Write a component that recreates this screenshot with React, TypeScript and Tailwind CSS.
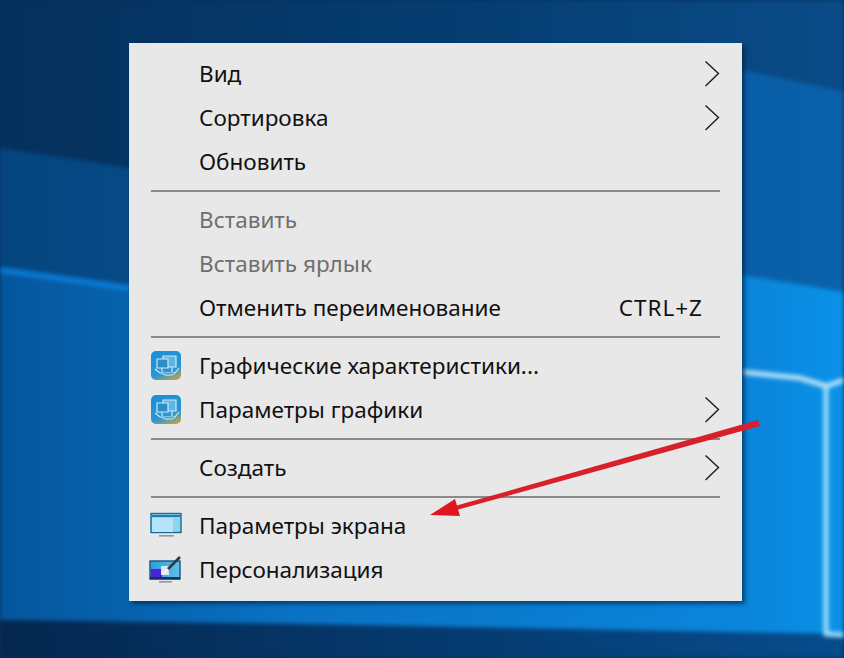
// Desktop context menu with a red annotation arrow
const Chevron = () => (
  <svg width="16" height="28" viewBox="0 0 16 28" fill="none" className="shrink-0">
    <path d="M1.5 1.5 L14.5 13.5 L1.5 26" stroke="#1a1a1a" strokeWidth="1.4" />
  </svg>
);

const GraphicsIcon = () => (
  <svg width="32" height="32" viewBox="0 0 32 32">
    <defs>
      <linearGradient id="gfx" x1="0.3" y1="0" x2="0.7" y2="1">
        <stop offset="0" stopColor="#1c8fd6" />
        <stop offset="0.7" stopColor="#2b97d2" />
        <stop offset="1" stopColor="#b3a15a" />
      </linearGradient>
    </defs>
    <rect x="1" y="1" width="30" height="29" rx="5" fill="url(#gfx)" />
    <path d="M13 6h13v11H13z" fill="#5cb5e2" stroke="#c8ecfa" strokeWidth="1.2" />
    <path d="M7 9h11v9H7z" fill="#2f8dc6" stroke="#c8ecfa" strokeWidth="1.2" />
    <path d="M5 19l5 4h15l4-5" fill="none" stroke="#c8ecfa" strokeWidth="1.2" />
    <path d="M12 23c0 3 13 3 13 0" fill="#4ba8da" stroke="#c8ecfa" strokeWidth="1" />
    <path d="M12 18v4M22 17v5" stroke="#c8ecfa" strokeWidth="1.2" />
  </svg>
);

const DisplayIcon = () => (
  <svg width="32" height="28" viewBox="0 0 32 28">
    <rect x="1" y="1.5" width="30" height="19" fill="#8fd2f2" stroke="#176a92" strokeWidth="1.4" />
    <rect x="2" y="6" width="21" height="14" fill="#b5e3f7" />
    <rect x="2" y="3" width="28" height="2" fill="#1d7fae" />
    <rect x="9" y="23" width="15" height="1.6" fill="#8a98a0" />
  </svg>
);

const PersonalizeIcon = () => (
  <svg width="34" height="32" viewBox="0 0 34 32">
    <defs>
      <linearGradient id="scr" x1="0" y1="0" x2="1" y2="0">
        <stop offset="0" stopColor="#2f9ed8" />
        <stop offset="1" stopColor="#5cc0ea" />
      </linearGradient>
    </defs>
    <rect x="1" y="7" width="30" height="18" fill="url(#scr)" stroke="#14547c" strokeWidth="1.4" />
    <rect x="2" y="15" width="11" height="8" fill="#4f1fe0" />
    <rect x="12" y="12" width="8" height="9" fill="#dbe6f5" />
    <rect x="1" y="23" width="30" height="2.4" fill="#14305c" />
    <path d="M18 16 L31 3" stroke="#2c3b45" strokeWidth="2.6" />
    <path d="M14 20 L19 15" stroke="#eef4f8" strokeWidth="3" />
    <rect x="10" y="27" width="13" height="1.6" fill="#8a98a0" />
  </svg>
);

const Row = ({
  label,
  icon,
  hint,
  arrow,
  disabled,
}: {
  label: string;
  icon?: React.ReactNode;
  hint?: string;
  arrow?: boolean;
  disabled?: boolean;
}) => (
  <div className="flex h-11 items-center">
    <div className="flex w-[70px] shrink-0 items-center justify-center pl-[3px]">{icon}</div>
    <span className={`flex-1 ${disabled ? 'text-[#6f6f6f]' : 'text-[#111111]'}`}>{label}</span>
    {hint && <span className="mr-[39px] tracking-[1px] text-[#111111]">{hint}</span>}
    {arrow && (
      <span className="mr-[22px]">
        <Chevron />
      </span>
    )}
  </div>
);

const Separator = () => (
  <div className="flex h-3.5 items-center px-[22px]">
    <div className="h-[2px] w-full bg-[#8a8a8a]" />
  </div>
);

export default function App() {
  return (
    <div className="relative h-[658px] w-[844px] overflow-hidden bg-[#05305c] font-['Noto_Sans',sans-serif]">
      {/* Wallpaper */}
      <svg className="absolute inset-0 blur-[2px]" width="844" height="658" viewBox="0 0 844 658">
        <defs>
          <linearGradient id="sky" x1="0" y1="0" x2="1" y2="0">
            <stop offset="0" stopColor="#05305c" />
            <stop offset="0.6" stopColor="#063f74" />
            <stop offset="1" stopColor="#0a4c88" />
          </linearGradient>
          <linearGradient id="topBand" x1="0" y1="0" x2="1" y2="0">
            <stop offset="0" stopColor="#05457f" />
            <stop offset="1" stopColor="#0a62ac" />
          </linearGradient>
          <linearGradient id="lowBand" x1="0" y1="0" x2="1" y2="0">
            <stop offset="0" stopColor="#05569c" />
            <stop offset="0.35" stopColor="#0a72c4" />
            <stop offset="0.9" stopColor="#0a86dc" />
            <stop offset="1" stopColor="#0a92e8" />
          </linearGradient>
          <linearGradient id="taskbar" x1="0" y1="0" x2="1" y2="0">
            <stop offset="0" stopColor="#05274f" />
            <stop offset="1" stopColor="#064c8c" />
          </linearGradient>
        </defs>
        <path d="M0 0H844V658H0Z" fill="url(#sky)" />
        <path d="M0 148 L130 168 L742 70 L844 92 L844 300 L0 290Z" fill="url(#topBand)" />
        <path d="M0 268 L130 286 L742 275 L844 292 L844 640 L0 625Z" fill="url(#lowBand)" />
        <path d="M0 270 L130 288" stroke="#0a7ad4" strokeWidth="6" />
        <path d="M0 620 L300 624 L844 634 L844 658 L0 658Z" fill="url(#taskbar)" />
        <path d="M742 372 L800 378 L826 386 L844 380" stroke="#b8e4f6" strokeWidth="5" fill="none" />
        <path d="M826 386 L826 634 L844 635" stroke="#a0e0fa" strokeWidth="5" fill="none" />
      </svg>

      {/* Context menu */}
      <div className="absolute left-[129px] top-[43px] w-[613px] bg-[#e9e8e8] py-[9px] text-[22.5px] leading-none shadow-[3px_3px_4px_rgba(0,30,60,0.6)]">
        <Row label="Вид" arrow />
        <Row label="Сортировка" arrow />
        <Row label="Обновить" />
        <Separator />
        <Row label="Вставить" disabled />
        <Row label="Вставить ярлык" disabled />
        <Row label="Отменить переименование" hint="CTRL+Z" />
        <Separator />
        <Row label="Графические характеристики..." icon={<GraphicsIcon />} />
        <Row label="Параметры графики" icon={<GraphicsIcon />} arrow />
        <Separator />
        <Row label="Создать" arrow />
        <Separator />
        <Row label="Параметры экрана" icon={<DisplayIcon />} />
        <Row label="Персонализация" icon={<PersonalizeIcon />} />
      </div>

      {/* Red arrow annotation */}
      <svg className="absolute inset-0" width="844" height="658" viewBox="0 0 844 658">
        <path d="M760 426 L453 511 L455 506 L758 420Z" fill="#d8202a" />
        <path d="M430 515 L455 499 L460 516Z" fill="#e0161f" />
      </svg>
    </div>
  );
}
